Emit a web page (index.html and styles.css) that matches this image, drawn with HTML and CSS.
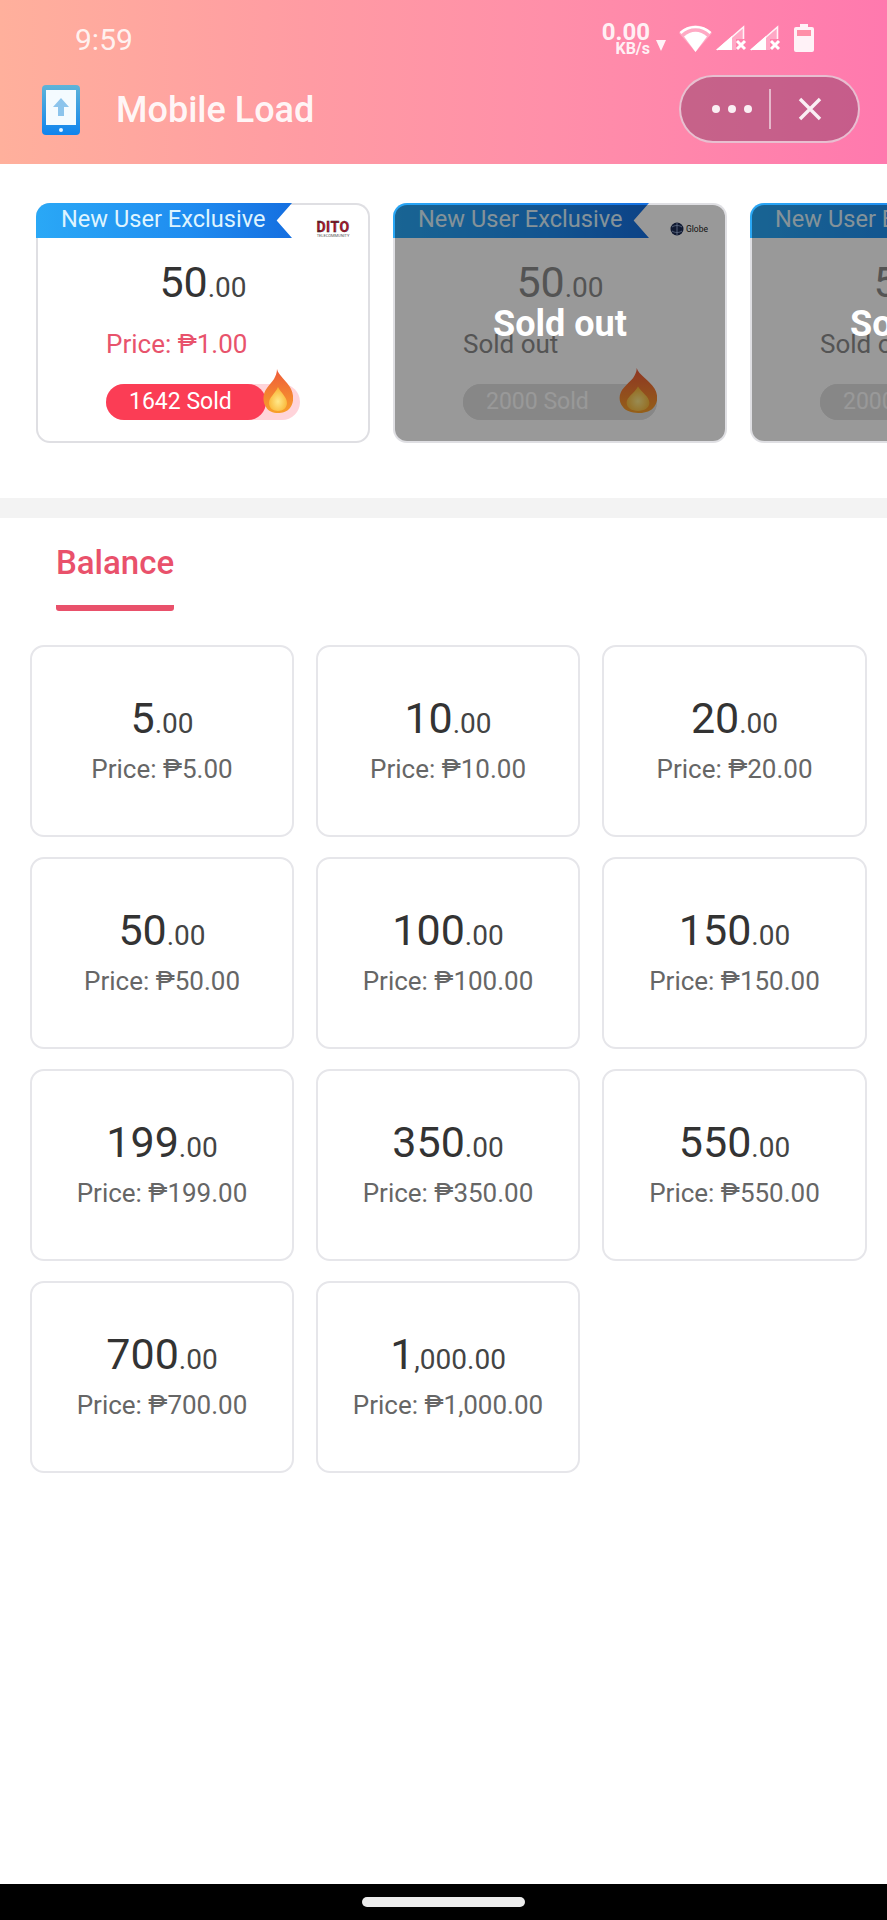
FILE: index.html
```html
<!DOCTYPE html>
<html lang="en">
<head>
<meta charset="utf-8">
<title>Mobile Load</title>
<link rel="stylesheet" href="styles.css">
</head>
<body>
<div class="page">
  <header class="header">
    <div class="status">
      <span class="time">9:59</span>
      <div class="status-icons">
        <div class="speed"><span class="speed-num">0.00</span><span class="speed-unit">KB/s</span></div>
        <svg class="ic-down" viewBox="0 0 10 11"><path d="M0 0H10L5 11Z" fill="#fff" fill-opacity=".9"/></svg>
        <svg class="ic-wifi" viewBox="0 0 33 27"><path d="M0 8C9-2 24-2 33 8L16.5 27Z" fill="#fff" fill-opacity=".3"/><path d="M5 11.5C12 5 21 5 28 11.5L16.5 27Z" fill="#fff"/><path d="M1.5 8C10 0 23 0 31.5 8" fill="none" stroke="#fff" stroke-width="2.6"/></svg>
        <svg class="ic-sig" viewBox="0 0 31 26"><path d="M0 25L28 1V14H20V25Z" fill="#fff" fill-opacity=".3"/><path d="M1 25L27.5 2V14" fill="none" stroke="#fff" stroke-opacity=".85" stroke-width="1.6"/><path d="M0 25L16 11V25Z" fill="#fff"/><path d="M21 16L29 24M29 16L21 24" stroke="#fff" stroke-width="3"/></svg>
        <svg class="ic-sig" viewBox="0 0 31 26"><path d="M0 25L28 1V14H20V25Z" fill="#fff" fill-opacity=".3"/><path d="M1 25L27.5 2V14" fill="none" stroke="#fff" stroke-opacity=".85" stroke-width="1.6"/><path d="M0 25L16 11V25Z" fill="#fff"/><path d="M21 16L29 24M29 16L21 24" stroke="#fff" stroke-width="3"/></svg>
        <svg class="ic-batt" viewBox="0 0 20 28"><path d="M6 0H14V3H18A2 2 0 0 1 20 5V26A2 2 0 0 1 18 28H2A2 2 0 0 1 0 26V5A2 2 0 0 1 2 3H6Z" fill="#fff" fill-opacity=".9"/><rect x="3" y="6" width="14" height="6" fill="#ff8fa8"/></svg>
      </div>
    </div>
    <div class="nav">
      <svg class="ic-app" viewBox="0 0 38 50">
        <defs><linearGradient id="appBody" x1="0" y1="0" x2="0" y2="1"><stop offset="0" stop-color="#5fb4d8"/><stop offset="1" stop-color="#0f84ee"/></linearGradient></defs>
        <rect width="38" height="50" rx="4" fill="url(#appBody)"/>
        <rect x="4" y="5" width="30" height="35" fill="#f4fbff"/>
        <path d="M19 13L27 22H22V31H16V22H11Z" fill="#8cc4ec"/>
        <circle cx="19" cy="45" r="2" fill="#e6f4ff"/>
      </svg>
      <h1 class="title">Mobile Load</h1>
      <div class="capsule">
        <div class="dots"><i></i><i></i><i></i></div>
        <div class="capsule-div"></div>
        <svg class="ic-close" viewBox="0 0 24 24"><path d="M2 2L22 22M22 2L2 22" stroke="#fff" stroke-opacity=".9" stroke-width="3.4"/></svg>
      </div>
    </div>
  </header>

  <section class="promos">
    <article class="promo">
      <div class="promo-top">
        <div class="ribbon">New User Exclusive</div>
        <div class="logo-dito"><b>DITO</b><small>TELECOMMUNITY</small></div>
      </div>
      <div class="amount promo-amount"><span class="big">50</span><span class="small">.00</span></div>
      <div class="promo-foot">
        <div class="promo-price">Price: ₱1.00</div>
        <div class="track">
          <div class="fill" style="width:160px">1642 Sold</div>
          <svg class="flame" viewBox="0 0 30 44" preserveAspectRatio="none"><use href="#flame-shape"/></svg>
        </div>
      </div>
    </article>

    <article class="promo is-soldout">
      <div class="promo-top">
        <div class="ribbon">New User Exclusive</div>
        <div class="logo-globe"><svg class="globe-mark" viewBox="0 0 14 14"><circle cx="7" cy="7" r="6.5" fill="#1b2a52"/><path d="M2 5C5 3 9 3 12 5M2 9C5 11 9 11 12 9M7 1V13" stroke="#8fa4cc" fill="none"/></svg><span>Globe</span></div>
      </div>
      <div class="amount promo-amount"><span class="big">50</span><span class="small">.00</span></div>
      <div class="promo-foot">
        <div class="promo-price">Sold out</div>
        <div class="track">
          <div class="fill" style="width:194px">2000 Sold</div>
          <svg class="flame flame-wide" viewBox="0 0 30 44" preserveAspectRatio="none"><use href="#flame-shape"/></svg>
        </div>
      </div>
      <div class="overlay">Sold out</div>
    </article>

    <article class="promo is-soldout">
      <div class="promo-top">
        <div class="ribbon">New User Exclusive</div>
      </div>
      <div class="amount promo-amount"><span class="big">50</span><span class="small">.00</span></div>
      <div class="promo-foot">
        <div class="promo-price">Sold out</div>
        <div class="track">
          <div class="fill" style="width:194px">2000 Sold</div>
        </div>
      </div>
      <div class="overlay">Sold out</div>
    </article>
  </section>

  <div class="band"></div>

  <main class="main">
    <div class="tabs"><div class="tab">Balance</div></div>
    <div class="grid">
      <div class="card"><div class="amount"><span class="big">5</span><span class="small">.00</span></div><div class="price">Price: ₱5.00</div></div>
      <div class="card"><div class="amount"><span class="big">10</span><span class="small">.00</span></div><div class="price">Price: ₱10.00</div></div>
      <div class="card"><div class="amount"><span class="big">20</span><span class="small">.00</span></div><div class="price">Price: ₱20.00</div></div>
      <div class="card"><div class="amount"><span class="big">50</span><span class="small">.00</span></div><div class="price">Price: ₱50.00</div></div>
      <div class="card"><div class="amount"><span class="big">100</span><span class="small">.00</span></div><div class="price">Price: ₱100.00</div></div>
      <div class="card"><div class="amount"><span class="big">150</span><span class="small">.00</span></div><div class="price">Price: ₱150.00</div></div>
      <div class="card"><div class="amount"><span class="big">199</span><span class="small">.00</span></div><div class="price">Price: ₱199.00</div></div>
      <div class="card"><div class="amount"><span class="big">350</span><span class="small">.00</span></div><div class="price">Price: ₱350.00</div></div>
      <div class="card"><div class="amount"><span class="big">550</span><span class="small">.00</span></div><div class="price">Price: ₱550.00</div></div>
      <div class="card"><div class="amount"><span class="big">700</span><span class="small">.00</span></div><div class="price">Price: ₱700.00</div></div>
      <div class="card"><div class="amount"><span class="big">1</span><span class="small">,000.00</span></div><div class="price">Price: ₱1,000.00</div></div>
    </div>
  </main>

  <footer class="homebar"><div class="handle"></div></footer>
</div>

<svg class="defs" width="0" height="0">
  <defs>
    <linearGradient id="flameOuter" x1="0" y1="0" x2="0" y2="1"><stop offset="0" stop-color="#ee5a3a"/><stop offset="1" stop-color="#f8a02a"/></linearGradient>
    <radialGradient id="flameInner" cx=".5" cy=".6" r=".6"><stop offset="0" stop-color="#ffe98a"/><stop offset="1" stop-color="#f9b12e"/></radialGradient>
    <symbol id="flame-shape" viewBox="0 0 30 44" preserveAspectRatio="none">
      <path d="M14 0C15 6 24 12 28 20C31 26 31 34 27 39C24 43 19 44 15 44C10 44 5 42 3 38C-1 32 0 24 4 19C6 16 9 13 11 10C12.500 7 14 4 14 0Z" fill="url(#flameOuter)"/>
      <path d="M15 18C18 24 24 28 24 34C24 39 20 42 15 42C10 42 6 39 6 34C6 28 12 25 15 18Z" fill="url(#flameInner)"/>
    </symbol>
  </defs>
</svg>
</body>
</html>
```
FILE: styles.css
```css
* { box-sizing: border-box; }
html, body { margin: 0; padding: 0; background: #fff; }
body { font-family: Roboto, "Liberation Sans", sans-serif; }
.page { width: 887px; height: 1920px; display: flex; flex-direction: column; overflow: hidden; }
.defs { display: block; position: absolute; }

.header { height: 164px; flex: none; background: linear-gradient(90deg, #ffb09c 0%, #ff9ba3 35%, #ff8fa9 62%, #ff79ae 100%); }
.status { height: 76px; display: flex; align-items: center; padding: 4px 73px 0 75px; justify-content: space-between; }
.time { font-size: 30px; color: rgba(255,255,255,.85); line-height: 1; }
.status-icons { display: flex; align-items: center; margin-top: -4px; }
.speed { display: flex; flex-direction: column; align-items: flex-end; width: 49px; color: rgba(255,255,255,.9); font-weight: 700; }
.speed-num { font-size: 24px; line-height: 20px; }
.speed-unit { font-size: 16px; line-height: 13px; }
.ic-down { width: 10px; height: 11px; margin: 14px 13px 0 6px; }
.ic-wifi { width: 33px; height: 27px; margin-right: 4px; }
.ic-sig { width: 31px; height: 26px; margin-right: 3px; }
.ic-batt { width: 20px; height: 28px; margin-left: 10px; }

.nav { height: 66px; display: flex; align-items: center; padding: 0 27px 0 42px; }
.ic-app { width: 38px; height: 50px; flex: none; margin-top: 2px; }
.title { margin: 2px 0 0 36px; font-size: 36px; font-weight: 500; color: rgba(255,255,255,.92); flex: 1; line-height: 1; }
.capsule { width: 181px; height: 68px; flex: none; border: 2px solid rgba(255,255,255,.6); border-radius: 34px; background: rgba(120,50,90,.42); display: flex; align-items: center; padding-left: 31px; }
.dots { display: flex; gap: 8px; width: 57px; flex: none; }
.dots i { width: 8px; height: 8px; border-radius: 50%; background: rgba(255,255,255,.9); }
.capsule-div { width: 2px; height: 40px; background: rgba(255,255,255,.55); flex: none; }
.ic-close { width: 24px; height: 24px; margin-left: 27px; flex: none; }

.promos { height: 334px; flex: none; display: flex; gap: 23px; padding: 39px 0 55px 36px; }
.promo { position: relative; flex: none; width: 334px; height: 240px; box-shadow: inset 0 0 0 2px #dfdfe3; border-radius: 14px; overflow: hidden; background: transparent; }
.promo-top { height: 35px; display: flex; justify-content: space-between; }
.ribbon { width: 256px; height: 35px; padding-left: 25px; font-size: 23.6px; line-height: 33px; color: #def4ff; white-space: nowrap;
  background: linear-gradient(90deg, #2aa8f6 0%, #1f8cf0 60%, #156fe0 100%);
  clip-path: polygon(0 0, 100% 0, 94% 50%, 100% 100%, 0 100%); }
.logo-dito { width: 36px; margin: 19px 19px 0 0; display: flex; flex-direction: column; align-items: center; }
.logo-dito b { font-size: 14px; line-height: 11px; letter-spacing: .5px; color: #b4122a; -webkit-text-stroke: .4px #222; }
.logo-dito small { font-size: 4px; line-height: 5px; color: #555; white-space: nowrap; }
.logo-globe { display: flex; align-items: center; gap: 2px; margin: 19px 19px 0 0; height: 14px; font-size: 8.5px; color: #222; }
.globe-mark { width: 14px; height: 14px; }

.amount { color: #333; text-align: center; line-height: 48px; white-space: nowrap; }
.big { font-size: 43px; }
.small { font-size: 28px; color: #444; }
.promo-amount { margin-top: 20px; }
.promo-foot { width: 194px; margin: 13px auto 0; }
.promo-price { font-size: 26px; line-height: 30px; color: #e8536c; white-space: nowrap; }
.track { position: relative; margin-top: 25px; height: 36px; border-radius: 18px; background: #ffd4da; }
.fill { height: 36px; border-radius: 18px; background: #fb3d55; color: #fff; font-size: 23px; line-height: 35px; padding-left: 23px; white-space: nowrap; }
.flame { position: absolute; right: 7px; bottom: 7px; width: 30px; height: 44px; }
.flame-wide { right: 0; bottom: 7px; width: 38px; height: 45px; }
.overlay { position: absolute; inset: 2px; padding-top: 2px; border-radius: 12px; background: rgba(0,0,0,.4); display: flex; align-items: center; justify-content: center; font-size: 36px; font-weight: 700; color: #fff; white-space: nowrap; }
.is-soldout .amount, .is-soldout .small, .is-soldout .promo-price { color: #8c8c8c; }
.is-soldout .track, .is-soldout .fill { background: #e2e2e2; }

.band { height: 20px; flex: none; background: #f3f3f3; }

.main { flex: 1; }
.tabs { height: 127px; padding: 0 0 0 56px; }
.tab { width: 118px; height: 93px; padding-top: 24px; font-size: 33px; font-weight: 500; line-height: 42px; color: #e9516b; border-bottom: 6px solid #e9516b; border-radius: 0 0 3px 3px; white-space: nowrap; }
.grid { display: grid; grid-template-columns: 264px 264px 265px; gap: 20px 22px; padding: 0 0 0 30px; }
.card { height: 192px; border: 2px solid #e6e6ea; border-radius: 14px; padding-top: 47px; display: flex; flex-direction: column; align-items: center; }
.price { margin-top: 2px; font-size: 26px; line-height: 30px; color: #666; white-space: nowrap; }

.homebar { height: 36px; flex: none; background: #000; display: flex; align-items: center; justify-content: center; }
.handle { width: 163px; height: 10px; border-radius: 5px; background: #ececec; }
```
